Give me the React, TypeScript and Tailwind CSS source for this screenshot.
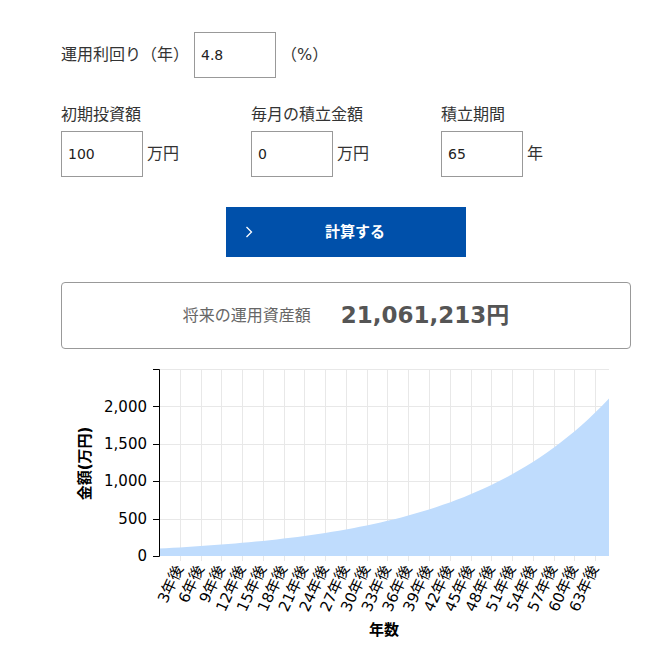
import React from 'react';

// simulation inputs
const RATE = 4.8;
const PRINCIPAL = 100; // 万円
const MONTHLY = 0; // 万円
const YEARS = 65;

function project(years: number): number[] {
  const out: number[] = [];
  let v = PRINCIPAL;
  for (let n = 0; n <= years; n++) {
    out.push(v);
    v = v * (1 + RATE / 100) + MONTHLY * 12;
  }
  return out;
}

// chart frame inside the svg
const SVG_W = 570;
const SVG_H = 300;
const LEFT = 98;
const RIGHT = 548;
const TOP = 14;
const BOTTOM = 201;
const Y_MAX = 2500;

function GrowthChart({ values }: { values: number[] }) {
  const last = values.length - 1;
  const x = (n: number) => LEFT + (n * (RIGHT - LEFT)) / last;
  const y = (v: number) => BOTTOM - (v * (BOTTOM - TOP)) / Y_MAX;

  const area =
    `M${LEFT},${BOTTOM} ` +
    values.map((v, i) => `L${x(i).toFixed(2)},${y(v).toFixed(2)}`).join(' ') +
    ` L${RIGHT},${BOTTOM} Z`;

  const yTicks = [0, 500, 1000, 1500, 2000];
  const xTicks: number[] = [];
  for (let n = 3; n <= last; n += 3) xTicks.push(n);

  return (
    <svg width={SVG_W} height={SVG_H} className="block">
      {/* grid */}
      <g stroke="#e8e8e8" strokeWidth={1}>
        <line x1={LEFT} x2={RIGHT} y1={TOP + 0.5} y2={TOP + 0.5} />
        {yTicks.slice(1).map((t) => (
          <line key={t} x1={LEFT} x2={RIGHT} y1={Math.round(y(t)) + 0.5} y2={Math.round(y(t)) + 0.5} />
        ))}
        {xTicks.map((n) => (
          <line key={n} x1={Math.round(x(n)) + 0.5} x2={Math.round(x(n)) + 0.5} y1={TOP} y2={BOTTOM + 5} />
        ))}
      </g>

      <path d={area} fill="#bfdcfd" />

      {/* y axis */}
      <path
        d={`M${LEFT - 6},${TOP + 0.5}H${LEFT + 0.5}V${BOTTOM + 0.5}H${LEFT - 6}`}
        fill="none"
        stroke="#000"
        strokeWidth={1}
      />
      {yTicks.map((t) => (
        <g key={t}>
          <line x1={LEFT - 6} x2={LEFT} y1={Math.round(y(t)) + 0.5} y2={Math.round(y(t)) + 0.5} stroke="#000" />
          <text x={LEFT - 12} y={y(t)} dy="0.35em" textAnchor="end" fontSize={15} fill="#000">
            {t.toLocaleString('en-US')}
          </text>
        </g>
      ))}
      <text
        transform={`translate(24, ${(TOP + BOTTOM) / 2 + 1}) rotate(-90)`}
        textAnchor="middle"
        dy="0.35em"
        fontSize={15}
        fontWeight={700}
        fill="#000"
      >
        金額(万円)
      </text>

      {/* x axis labels */}
      {xTicks.map((n) => (
        <text
          key={n}
          transform={`translate(${x(n) - 1}, ${BOTTOM + 10}) rotate(-65)`}
          textAnchor="end"
          dy="0.35em"
          fontSize={15}
          fill="#000"
        >
          {n}年後
        </text>
      ))}
      <text x={(LEFT + RIGHT) / 2} y={275} textAnchor="middle" dy="0.35em" fontSize={15} fontWeight={700} fill="#000">
        年数
      </text>
    </svg>
  );
}

function Field({ label, value, unit }: { label: string; value: string; unit: string }) {
  return (
    <div className="w-[190px]">
      <div className="h-[24px] leading-[24px] text-[16px] text-[#333]">{label}</div>
      <div className="mt-[4px] flex items-center">
        <input
          defaultValue={value}
          className="h-[46px] w-[82px] border border-[#999] bg-white px-[6px] text-[14px] text-[#222] outline-none"
        />
        <span className="ml-[4px] text-[16px] text-[#333]">{unit}</span>
      </div>
    </div>
  );
}

export default function App() {
  const values = project(YEARS);
  const total = Math.round(values[values.length - 1] * 10000);

  return (
    <div className="min-h-[655px] bg-white font-['DejaVu_Sans','Noto_Sans_CJK_JP',sans-serif]">
      <div className="ml-[61px] w-[570px] pt-[32px]">
        {/* rate */}
        <div className="flex h-[46px] items-center">
          <span className="text-[16px] text-[#333]">運用利回り（年）</span>
          <input
            defaultValue={String(RATE)}
            className="ml-[5px] h-[46px] w-[82px] border border-[#999] bg-white px-[6px] text-[14px] text-[#222] outline-none"
          />
          <span className="ml-[5px] text-[16px] text-[#333]">（%）</span>
        </div>

        {/* amounts */}
        <div className="mt-[25px] flex">
          <Field label="初期投資額" value={String(PRINCIPAL)} unit="万円" />
          <Field label="毎月の積立金額" value={String(MONTHLY)} unit="万円" />
          <Field label="積立期間" value={String(YEARS)} unit="年" />
        </div>

        <div className="mt-[30px] flex justify-center">
          <button className="relative flex h-[50px] w-[240px] items-center justify-center bg-[#0050aa] text-white">
            <svg className="absolute left-[19px] top-[19px]" width="8" height="12" viewBox="0 0 8 12">
              <polyline points="1.5,1 6.5,6 1.5,11" fill="none" stroke="#fff" strokeWidth="1.3" />
            </svg>
            <span className="pl-[18px] text-[15px] font-bold">計算する</span>
          </button>
        </div>

        {/* result */}
        <div className="mt-[25px] flex h-[67px] items-center justify-center gap-[30px] rounded-[4px] border border-[#999]">
          <span className="text-[16px] text-[#666]">将来の運用資産額</span>
          <span className="text-[23px] font-bold text-[#555]">{total.toLocaleString('en-US')}円</span>
        </div>

        <div className="mt-[6px]">
          <GrowthChart values={values} />
        </div>
      </div>
    </div>
  );
}
